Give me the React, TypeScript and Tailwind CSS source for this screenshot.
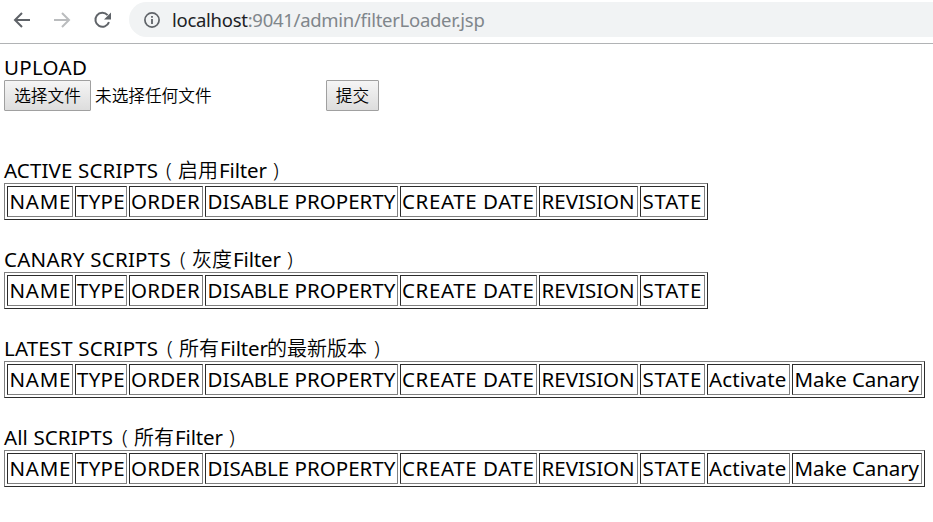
import React from "react";

type Column = { label: string; size: string };

const baseColumns: Column[] = [
  { label: "NAME", size: "w-[66px] pl-[1.5px] tracking-[0.75px]" },
  { label: "TYPE", size: "w-[52px] pl-px tracking-[0.3px]" },
  { label: "ORDER", size: "w-[74px] pl-px tracking-[0.2px]" },
  { label: "DISABLE PROPERTY", size: "w-[193px] pl-[1.5px] tracking-[0px]" },
  { label: "CREATE DATE", size: "w-[137px] pl-px tracking-[0.6px]" },
  { label: "REVISION", size: "w-[99px] pl-[1.5px] tracking-[0px]" },
  { label: "STATE", size: "w-[65px] pl-[1.5px] tracking-[0.8px]" },
];

const actionColumns: Column[] = [
  ...baseColumns,
  { label: "Activate", size: "w-[83px] pl-px tracking-[0.1px]" },
  { label: "Make Canary", size: "w-[130px] pl-[1.5px] tracking-[-0.1px]" },
];

function HeaderTable({ columns }: { columns: Column[] }) {
  return (
    <div className="flex h-[37px] w-fit gap-[2px] border border-t-[#808080] border-r-[#2b2b2b] border-b-[#2b2b2b] border-l-[#808080] p-[2px]">
      {columns.map((c) => (
        <div
          key={c.label}
          className={`h-[31px] shrink-0 border border-t-[#2b2b2b] border-r-[#808080] border-b-[#808080] border-l-[#2b2b2b] leading-[29px] whitespace-nowrap ${c.size}`}
        >
          {c.label}
        </div>
      ))}
    </div>
  );
}

type SectionProps = {
  title: string;
  titleSize: string;
  before: string;
  after?: string;
  columns: Column[];
};

function Section({ title, titleSize, before, after, columns }: SectionProps) {
  return (
    <section className="h-[89px]">
      <h2 className="flex h-[26px] leading-[26px] whitespace-nowrap">
        <span className={titleSize}>{title}</span>
        <span className="w-[20px] pl-[8px] font-light">(</span>
        <span className="pt-px text-[20px] font-[350]">{before}</span>
        <span className="w-[48px] pl-px tracking-[-0.15px]">Filter</span>
        {after && <span className="pt-px text-[20px] font-[350]">{after}</span>}
        <span className="pl-[7px] font-light">)</span>
      </h2>
      <HeaderTable columns={columns} />
    </section>
  );
}

const buttonClass =
  "h-[31px] shrink-0 border border-[#a0a0a0] bg-linear-to-b from-[#f5f5f5] to-[#dddddd] text-center leading-[30px] rounded-[1px]";

export default function App() {
  return (
    <div className="h-[522px] w-[933px] overflow-hidden bg-white font-['Noto_Sans','Noto_Sans_CJK_SC',sans-serif] text-[20.5px] text-black">
      <header className="flex h-[44px] items-start border-b border-[#b1b3b5]">
        <div className="flex h-[39px] w-[129px] shrink-0 items-center pl-[13px]">
          <svg width="104" height="20" viewBox="0 0 104 20" fill="none">
            <g stroke="#5f6368" strokeWidth="2">
              <path d="M17 10H2.5M9 3L2 10l7 7" />
              <path d="M94.6 5.1A7 7 0 1 0 96 12.2" />
            </g>
            <path d="M98 2.5v7h-7z" fill="#5f6368" />
            <path d="M41 10h14.5M49 3l7 7-7 7" stroke="#babcbe" strokeWidth="2" />
          </svg>
        </div>
        <div className="mt-[2px] flex h-[35px] flex-1 items-center rounded-l-full bg-[#f1f3f4] pl-[15px]">
          <svg width="16" height="16" viewBox="0 0 16 16" fill="none">
            <circle cx="8" cy="8" r="7.1" stroke="#5f6368" strokeWidth="1.7" />
            <path d="M8 7v5M8 4v1.8" stroke="#5f6368" strokeWidth="1.8" />
          </svg>
          <span className="ml-[12px] text-[18.5px] tracking-[-0.28px] whitespace-nowrap text-[#80868b]">
            <span className="text-[#202124]">localhost</span>:9041/admin/filterLoader.jsp
          </span>
        </div>
      </header>

      <main className="pl-[4px]">
        <div className="mt-[10px] h-[26px] tracking-[0.3px] leading-[27px]">UPLOAD</div>
        <form className="flex h-[77px] items-start text-[16.67px] font-[350]" onSubmit={(e) => e.preventDefault()}>
          <button type="button" className={`w-[87px] ${buttonClass}`}>选择文件</button>
          <span className="w-[235px] pl-[4px] leading-[32px]">未选择任何文件</span>
          <button type="submit" className={`w-[53px] ${buttonClass}`}>提交</button>
        </form>
        <Section title="ACTIVE SCRIPTS" titleSize="w-[154px] tracking-[0.15px]" before="启用" columns={baseColumns} />
        <Section title="CANARY SCRIPTS" titleSize="w-[168px] tracking-[0.25px]" before="灰度" columns={baseColumns} />
        <Section title="LATEST SCRIPTS" titleSize="w-[155px] tracking-[0.15px]" before="所有" after="的最新版本" columns={actionColumns} />
        <Section title="All SCRIPTS" titleSize="w-[110px] tracking-[0.1px]" before="所有" columns={actionColumns} />
      </main>
    </div>
  );
}
